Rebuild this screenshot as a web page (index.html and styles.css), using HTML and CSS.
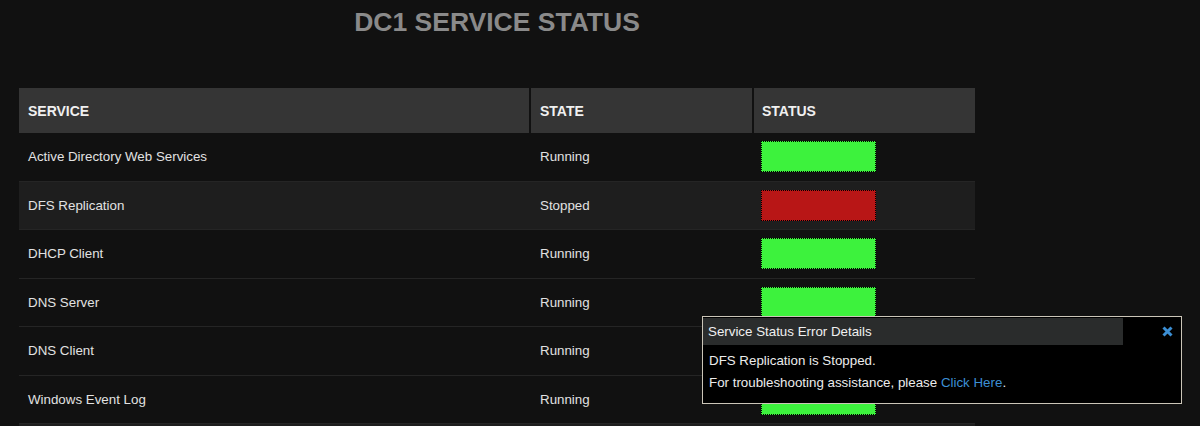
FILE: index.html
```html
<!DOCTYPE html>
<html>
<head>
<meta charset="utf-8">
<link rel="stylesheet" href="styles.css">
</head>
<body>
<div class="page">
  <h1 class="title">DC1 SERVICE STATUS</h1>
  <div class="table">
    <div class="thead">
      <div class="th">SERVICE</div>
      <div class="th">STATE</div>
      <div class="th">STATUS</div>
    </div>
    <div class="row">
      <div class="td">Active Directory Web Services</div>
      <div class="td">Running</div>
      <div class="td"><span class="bar ok"></span></div>
    </div>
    <div class="row alt">
      <div class="td">DFS Replication</div>
      <div class="td">Stopped</div>
      <div class="td"><span class="bar bad"></span></div>
    </div>
    <div class="row">
      <div class="td">DHCP Client</div>
      <div class="td">Running</div>
      <div class="td"><span class="bar ok"></span></div>
    </div>
    <div class="row">
      <div class="td">DNS Server</div>
      <div class="td">Running</div>
      <div class="td"><span class="bar ok"></span></div>
    </div>
    <div class="row">
      <div class="td">DNS Client</div>
      <div class="td">Running</div>
      <div class="td"><span class="bar ok"></span></div>
    </div>
    <div class="row">
      <div class="td">Windows Event Log</div>
      <div class="td">Running</div>
      <div class="td"><span class="bar ok"></span></div>
    </div>
    <div class="row alt"></div>
  </div>
</div>
<div class="popup">
  <div class="popup-head">
    <div class="popup-title">Service Status Error Details</div>
    <svg class="close" width="11" height="11" viewBox="0 0 11 11"><path d="M1.5 1.5 L9.5 9.5 M9.5 1.5 L1.5 9.5" stroke="#3b8ed3" stroke-width="3" stroke-linecap="butt"/></svg>
  </div>
  <div class="popup-body">
    <p>DFS Replication is Stopped.</p>
    <p>For troubleshooting assistance, please <a href="#">Click Here</a>.</p>
  </div>
</div>
</body>
</html>
```
FILE: styles.css
```css
html, body {
  margin: 0;
  padding: 0;
  background: #111111;
  height: 426px;
  overflow: hidden;
}
body {
  font-family: "Liberation Sans", Arial, sans-serif;
  font-size: 13.33px;
  color: #e2e2e2;
}
.page {
  width: 956px;
  padding: 0 19px;
}
.title {
  margin: 0;
  padding-top: 7px;
  height: 88px;
  box-sizing: border-box;
  font-size: 26.5px;
  line-height: 30px;
  font-weight: bold;
  color: #8a8a8a;
  text-align: center;
}
.thead, .row {
  display: grid;
  grid-template-columns: 510px 221px 221px;
  column-gap: 2px;
}
.th {
  background: #353535;
  height: 45px;
  line-height: 46px;
  padding-left: 9px;
  font-size: 14px;
  font-weight: bold;
  color: #f0f0f0;
}
.th:last-child { padding-left: 8px; }
.row {
  height: 48.5px;
  border-bottom: 1px solid #252525;
  box-sizing: border-box;
}
.row.alt { background: #1e1e1e; }
.td {
  display: flex;
  align-items: center;
  padding-left: 9px;
}
.td:last-child { padding-left: 7px; }
.bar {
  display: block;
  width: 115px;
  height: 31px;
  box-sizing: border-box;
  border: 1px dotted #000;
}
.bar.ok { background: #3df23d; }
.bar.bad { background: #b81616; }
.popup {
  position: absolute;
  left: 702px;
  top: 316px;
  width: 480px;
  height: 88px;
  box-sizing: border-box;
  border: 1px solid #cbc5b8;
  background: #000;
  padding-top: 1px;
}
.popup-head {
  display: flex;
  align-items: center;
  justify-content: space-between;
  height: 27px;
}
.popup-title {
  width: 420px;
  height: 27px;
  line-height: 27px;
  background: #2a2c2c;
  padding-left: 5px;
  box-sizing: border-box;
  color: #f0f0f0;
}
.close {
  margin-right: 8px;
}
.popup-body {
  padding: 5px 0 0 6px;
}
.popup-body p {
  margin: 0;
  line-height: 22px;
  color: #ececec;
}
.popup-body a {
  color: #3d8fd4;
  text-decoration: none;
}
```
